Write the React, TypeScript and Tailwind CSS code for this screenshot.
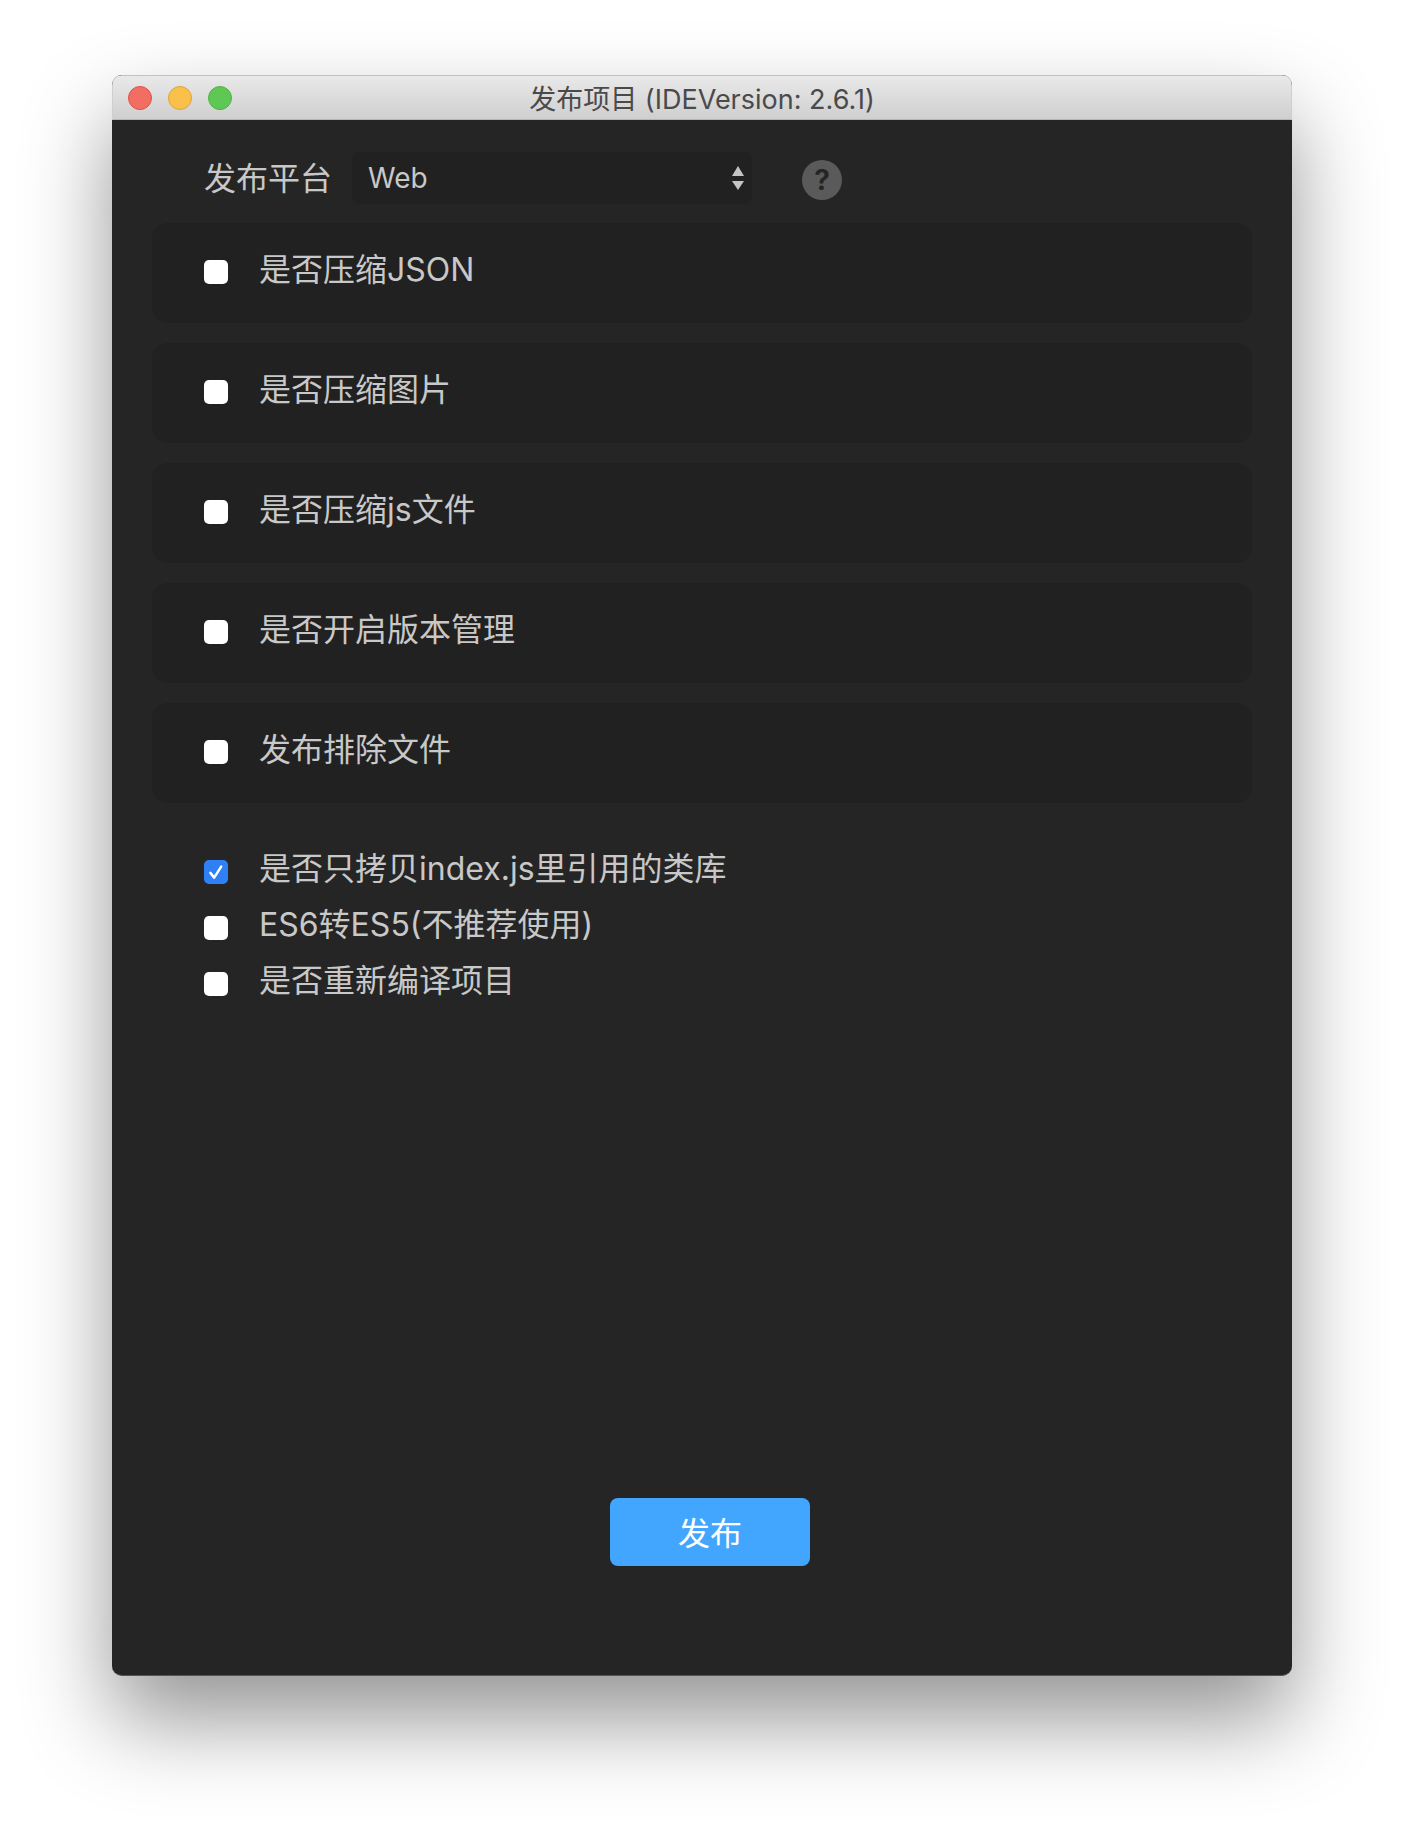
const PANEL_ROWS = ['是否压缩JSON', '是否压缩图片', '是否压缩js文件', '是否开启版本管理', '发布排除文件'];

const CHECK_ROWS = [
  { label: '是否只拷贝index.js里引用的类库', checked: true },
  { label: 'ES6转ES5(不推荐使用)', checked: false },
  { label: '是否重新编译项目', checked: false },
];

function Checkbox({ checked = false }: { checked?: boolean }) {
  if (checked) {
    return (
      <div className="w-6 h-6 shrink-0 rounded-[5px] bg-[#2f80f6] flex items-center justify-center">
        <svg width="18" height="18" viewBox="0 0 16 16" fill="none">
          <path d="M3 8.8 L6.4 13 L12.6 3.2" stroke="#fff" strokeWidth="2.2" strokeLinecap="round" strokeLinejoin="round" />
        </svg>
      </div>
    );
  }
  return <div className="w-6 h-6 shrink-0 rounded-[5px] bg-white" />;
}

function CheckRow({ label, checked }: { label: string; checked?: boolean }) {
  return (
    <div className="flex items-center gap-[31px] h-6">
      <Checkbox checked={checked} />
      <span className="text-[32px] leading-[40px] text-[#c8c8c8] whitespace-nowrap -translate-y-[3px]">{label}</span>
    </div>
  );
}

function PanelRow({ label }: { label: string }) {
  return (
    <div className="h-[100px] rounded-2xl bg-[#212121] flex items-center gap-[31px] pl-[52px]">
      <div className="-translate-y-[1px]">
        <Checkbox />
      </div>
      <span className="text-[32px] leading-[40px] text-[#c8c8c8] whitespace-nowrap -translate-y-[3px]">{label}</span>
    </div>
  );
}

export default function App() {
  return (
    <div className="w-[1404px] h-[1824px] bg-white pt-[75px] pl-[112px] font-['Inter','Noto_Sans_CJK_SC',sans-serif]">
      <div className="w-[1180px] h-[1601px] rounded-[10px] overflow-hidden bg-[#252525] flex flex-col border-b border-[#555] shadow-[0_44px_88px_rgba(0,0,0,0.42)]">
        {/* Title bar */}
        <div className="relative h-[45px] shrink-0 flex items-center justify-center bg-gradient-to-b from-[#e9e9e9] to-[#cfcfcf] border-t border-x border-b border-t-[#c2c2c2] border-x-[#cfcfcf] border-b-[#b5b5b5]">
          <div className="absolute left-[15px] top-[10px] flex gap-4">
            <div className="w-6 h-6 rounded-full bg-[#f26d62] border border-[#dd5249]" />
            <div className="w-6 h-6 rounded-full bg-[#f9c04c] border border-[#e0a536]" />
            <div className="w-6 h-6 rounded-full bg-[#5fc854] border border-[#4fb146]" />
          </div>
          <span className="text-[27px] leading-[36px] text-[#4a4a4a] whitespace-nowrap translate-y-[2px]">发布项目 (IDEVersion: 2.6.1)</span>
        </div>

        <div className="flex-1 flex flex-col">
          {/* Platform select */}
          <div className="flex items-center mt-8 ml-[92px] h-[52px]">
            <span className="text-[32px] leading-[40px] text-[#c8c8c8] w-[148px] whitespace-nowrap translate-y-[1px]">发布平台</span>
            <div className="w-[400px] h-[52px] rounded-lg bg-[#212121] flex items-center justify-between pl-[16px] pr-[7px]">
              <span className="text-[28px] text-[#c8c8c8]">Web</span>
              <svg width="14" height="26" viewBox="0 0 14 26">
                <path d="M7 1 L13 11 L1 11 Z" fill="#c4c4c4" />
                <path d="M1 16 L13 16 L7 25 Z" fill="#c4c4c4" />
              </svg>
            </div>
            <div className="ml-[50px] w-10 h-10 rounded-full bg-[#5a5a5a] flex items-center justify-center text-[28px] font-bold text-[#252525] translate-y-[2px]">?</div>
          </div>

          {/* Panel rows */}
          <div className="flex flex-col gap-5 mt-[19px] mx-10">
            {PANEL_ROWS.map((label) => (
              <PanelRow key={label} label={label} />
            ))}
          </div>

          {/* Plain check rows */}
          <div className="flex flex-col gap-8 mt-[57px] ml-[92px]">
            {CHECK_ROWS.map((row) => (
              <CheckRow key={row.label} label={row.label} checked={row.checked} />
            ))}
          </div>

          <div className="flex justify-center mt-[502px] ml-[16px]">
            <button className="w-[200px] h-[68px] rounded-lg bg-[#42a6ff] text-white text-[32px] pt-[3px]">发布</button>
          </div>
        </div>
      </div>
    </div>
  );
}
